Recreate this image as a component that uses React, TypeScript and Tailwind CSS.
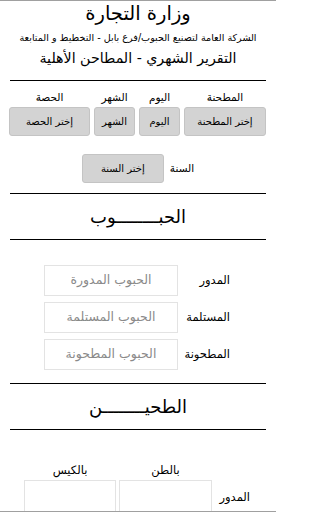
const Rule = () => <div className="mx-[10px] h-px bg-black" />;

const SelectColumn = ({ label, text, width }: { label: string; text: string; width: string }) => (
  <div className={`flex flex-col items-center ${width}`}>
    <span className="text-[10.5px] leading-[14px] text-black">{label}</span>
    <button className="mt-[3px] h-[29px] w-full rounded-[3px] border border-[#c4c4c4] bg-[#d3d3d3] text-[10px] text-black">
      {text}
    </button>
  </div>
);

const InputRow = ({ label, placeholder }: { label: string; placeholder: string }) => (
  <div className="flex items-center pr-[46px]">
    <span className="w-[50px] text-right text-[11.5px] text-black">{label}</span>
    <div className="mr-[2px] flex h-[31px] w-[134px] items-center justify-center border border-[#e3e3e3] text-[12.5px] text-[#8a8a8a]">
      {placeholder}
    </div>
  </div>
);

const App = () => {
  return (
    <div
      dir="rtl"
      className="h-[512px] w-[276px] overflow-hidden border-y border-[#a0a0a0] bg-white text-black"
      style={{ fontFamily: '"DejaVu Sans", sans-serif' }}
    >
      {/* Header */}
      <div className="flex flex-col items-center pt-[1px]">
        <h1 className="text-[19.5px] leading-[24px]">وزارة التجارة</h1>
        <p className="mt-[5px] text-[9.6px] leading-[14px]">الشركة العامة لتصنيع الحبوب/فرع بابل - التخطيط و المتابعة</p>
        <h2 className="mt-[3px] text-[14.2px] leading-[20px]">التقرير الشهري - المطاحن الأهلية</h2>
      </div>

      <div className="mt-[12px]">
        <Rule />
      </div>

      {/* Selection buttons */}
      <div className="mt-[9px] flex gap-[4px] pr-[10px]">
        <SelectColumn label="المطحنة" text="إختر المطحنة" width="w-[82px]" />
        <SelectColumn label="اليوم" text="اليوم" width="w-[41px]" />
        <SelectColumn label="الشهر" text="الشهر" width="w-[41px]" />
        <SelectColumn label="الحصة" text="إختر الحصة" width="w-[81px]" />
      </div>

      <div className="mt-[18px] flex items-center justify-center gap-[6px]">
        <span className="text-[10.5px]">السنة</span>
        <button className="h-[29px] w-[82px] rounded-[3px] border border-[#c4c4c4] bg-[#d3d3d3] text-[10px]">
          إختر السنة
        </button>
      </div>

      <div className="mt-[10px]">
        <Rule />
      </div>
      <div className="flex h-[45px] items-center justify-center text-[18px]">الحبــــــــوب</div>
      <Rule />

      {/* Grains inputs */}
      <div className="mt-[25px] flex flex-col gap-[6px]">
        <InputRow label="المدور" placeholder="الحبوب المدورة" />
        <InputRow label="المستلمة" placeholder="الحبوب المستلمة" />
        <InputRow label="المطحونة" placeholder="الحبوب المطحونة" />
      </div>

      <div className="mt-[13px]">
        <Rule />
      </div>
      <div className="flex h-[45px] items-center justify-center text-[18px]">الطحيــــــــن</div>
      <Rule />

      {/* Flour inputs */}
      <div className="mt-[32px] flex items-end pr-[26px]">
        <span className="mb-[8px] w-[36px] text-right text-[11.5px]">المدور</span>
        <div className="mr-[2px] flex flex-col items-center">
          <span className="text-[11.5px] leading-[16px]">بالطن</span>
          <div className="mt-[2px] h-[34px] w-[93px] border border-[#e3e3e3]" />
        </div>
        <div className="mr-[3px] flex flex-col items-center">
          <span className="text-[11.5px] leading-[16px]">بالكيس</span>
          <div className="mt-[2px] h-[34px] w-[92px] border border-[#e3e3e3]" />
        </div>
      </div>
    </div>
  );
};

export default App;
